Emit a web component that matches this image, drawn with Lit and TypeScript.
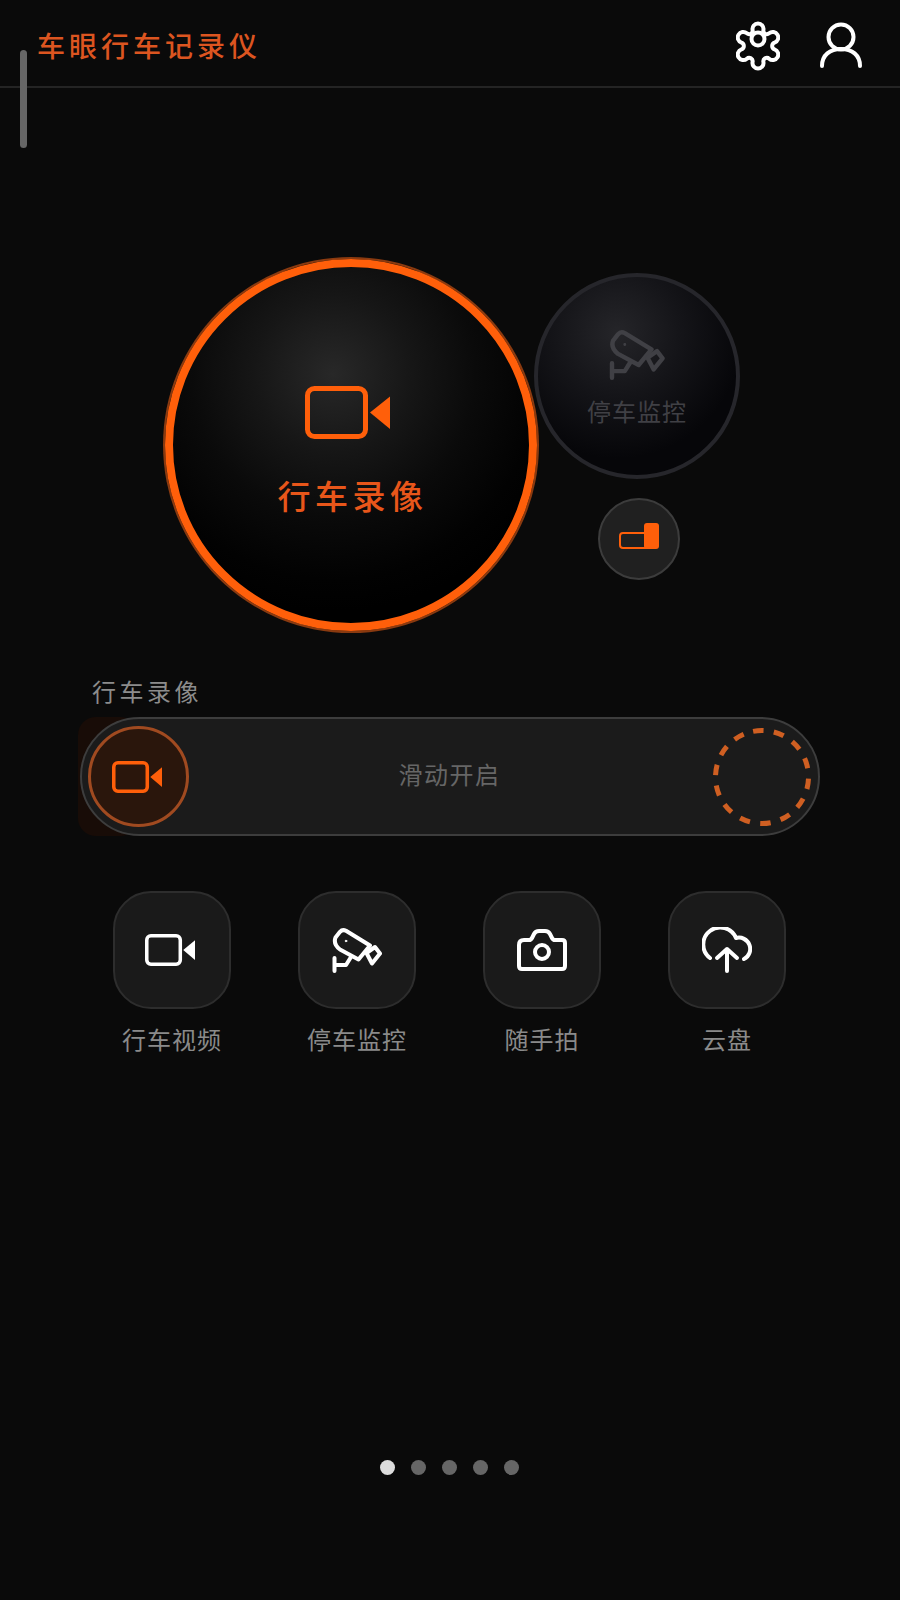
import { LitElement, html, css, svg } from "lit";
import { customElement } from "lit/decorators.js";

function gearPath(): string {
  const cx = 22, cy = 25, R = 17, r = 5.5, rv = 3.5, n = 6;
  const half = R * Math.sin(Math.PI / n);
  const apo = R * Math.cos(Math.PI / n);
  const dv = apo + Math.sqrt((r + rv) ** 2 - half ** 2);
  const pol = (rad: number, deg: number): [number, number] => [
    cx + rad * Math.cos((deg * Math.PI) / 180),
    cy + rad * Math.sin((deg * Math.PI) / 180),
  ];
  const tangent = (lobeDeg: number, valleyDeg: number) => {
    const c = pol(R, lobeDeg);
    const v = pol(dv, valleyDeg);
    const t = r / (r + rv);
    return [c[0] + (v[0] - c[0]) * t, c[1] + (v[1] - c[1]) * t];
  };
  let d = "";
  for (let i = 0; i < n; i++) {
    const a = -90 + i * 60;
    const start = tangent(a, a - 30);
    const end = tangent(a, a + 30);
    const next = tangent(a + 60, a + 30);
    if (i === 0) d += `M${start[0].toFixed(2)} ${start[1].toFixed(2)}`;
    d += `A${r} ${r} 0 1 1 ${end[0].toFixed(2)} ${end[1].toFixed(2)}`;
    d += `A${rv} ${rv} 0 0 0 ${next[0].toFixed(2)} ${next[1].toFixed(2)}`;
  }
  return d + "Z";
}

const videoIcon = (w: number, h: number, sw: number, cls: string) => html`
  <svg class=${cls} width=${w} height=${h} viewBox="0 0 85 53" preserveAspectRatio="none">
    <rect x=${sw / 2} y=${sw / 2} width=${63 - sw} height=${53 - sw} rx="7" fill="none" stroke="currentColor" stroke-width=${sw}></rect>
    <path d="M65 26.5 85 10.5V43Z" fill="currentColor"></path>
  </svg>`;

const cctvIcon = (w: number, h: number, cls: string) => html`
  <svg class=${cls} width=${w} height=${h} viewBox="0 0 50 45" fill="none" stroke="currentColor" stroke-width="4" stroke-linejoin="round" stroke-linecap="round">
    <path d="M3.5 9.5 8 3.8Q10.5 1 14 2.8L38 17.500 26.500 31.500 8 21.5Q1 16 3.5 9.5Z"></path>
    <path d="M34.5 25 43 19 48 25.5 40 35.5Z"></path>
    <path d="M2.5 30V43M2.5 37H14L19 29"></path>
    <circle cx="14" cy="13" r=".8" fill="currentColor" stroke-width="1"></circle>
  </svg>`;

const tiles = [
  { label: "行车视频", icon: () => videoIcon(50, 32, 6, "ink nudge") },
  { label: "停车监控", icon: () => cctvIcon(50, 45, "ink") },
  {
    label: "随手拍",
    icon: () => html`<svg class="ink" width="50" height="42" viewBox="0 0 50 42" fill="none" stroke="currentColor" stroke-width="4" stroke-linejoin="round" stroke-linecap="round">
      <path d="M2 16Q2 11 7 11H12Q14 11 15 9L17 5Q18.500 2 22 2H28Q31.500 2 33 5L35 9Q36 11 38 11H45Q48 11 48 14V37Q48 40 45 40H5Q2 40 2 37Z"></path>
      <circle cx="25" cy="23" r="7"></circle>
    </svg>`,
  },
  {
    label: "云盘",
    icon: () => html`<svg class="ink" width="50" height="46" viewBox="0 0 50 46" fill="none" stroke="currentColor" stroke-width="4" stroke-linecap="round" stroke-linejoin="round">
      <path d="M8 31A17 17 0 1 1 34 11A11.300 11.300 0 0 1 42 32"></path>
      <path d="M25 44V22M15 31 25 22 35 31"></path>
    </svg>`,
  },
];

@customElement("app-root")
export class AppRoot extends LitElement {
  static styles = css`
    :host {
      display: block;
      width: 900px;
      height: 1600px;
      background: #0a0a0a;
      font-family: "Noto Sans CJK SC", "Noto Sans", sans-serif;
      overflow: hidden;
    }
    .page { position: relative; width: 900px; height: 1600px; display: flex; flex-direction: column; }
    .scrollbar {
      position: absolute; left: 20px; top: 50px; width: 7px; height: 98px;
      background: #666; border-radius: 4px;
    }
    header {
      height: 88px; box-sizing: border-box; border-bottom: 2px solid #242424;
      display: flex; align-items: center; padding: 4px 38px 0 37px;
    }
    .title { flex: 1; color: #dc5520; font-size: 28px; font-weight: 500; letter-spacing: 4px; line-height: 36px; }
    .head-icons { display: flex; align-items: center; gap: 40px; color: #fff; }
    .gear { margin-top: 1px; }
    .hero { display: flex; margin: 169px 0 0 163px; }
    .big {
      width: 372px; height: 372px; margin: 2px; box-sizing: border-box; border-radius: 50%;
      border: 8.5px solid #ff5f0a;
      box-shadow: 0 0 0 2px #8a3a10;
      background: radial-gradient(circle at 45% 30%, #282828 0, #161616 25%, #0a0a0a 45%, #020202 65%, #000 75%);
      display: flex; flex-direction: column; align-items: center;
      color: #ff5f0a; position: relative; z-index: 1;
    }
    .big svg { margin: 119px 8px 0 0; }
    .big span { color: #e8561a; font-size: 33px; font-weight: 500; letter-spacing: 4.5px; line-height: 44px; margin: 34px 0 0 3px; }
    .side { display: flex; flex-direction: column; align-items: center; margin: 16px 0 0 -5px; }
    .small {
      width: 206px; height: 206px; box-sizing: border-box; border-radius: 50%;
      border: 4px solid #26262b;
      background: radial-gradient(circle at 40% 28%, #252529 0, #141418 35%, #060609 68%);
      display: flex; flex-direction: column; align-items: center; color: #404045;
    }
    .small svg { margin-top: 53px; }
    .small span { font-size: 24px; letter-spacing: 1px; line-height: 34px; margin-top: 14px; }
    .toggle {
      width: 82px; height: 82px; box-sizing: border-box; border-radius: 50%;
      margin: 19px 0 0 4px; background: #202020; border: 2px solid #3c3c3c;
      display: flex; align-items: center; justify-content: center;
    }
    .toggle svg { margin-bottom: 7px; }
    .slider-label { color: #8c8c8c; font-size: 24px; letter-spacing: 3.5px; line-height: 32px; margin: 42px 0 0 92px; }
    .slider-wrap { position: relative; margin: 10px 0 0 80px; width: 740px; }
    .slider-glow {
      position: absolute; left: -2px; top: 0; width: 60px; height: 119px;
      background: #180c07; border-radius: 18px;
    }
    .slider {
      position: relative; height: 119px; box-sizing: border-box; border-radius: 60px;
      background: #1b1b1b; border: 2px solid #3d3d3d;
      display: flex; align-items: center; justify-content: space-between; padding: 0 7px 0 6px;
    }
    .knob {
      width: 101px; height: 101px; box-sizing: border-box; border-radius: 50%;
      border: 3px solid #a04a20; background: #2a160c; color: #ff5f0a;
      display: flex; align-items: center; justify-content: center;
    }
    .knob svg { margin-right: 4px; }
    .hint { color: #666; font-size: 24px; line-height: 34px; letter-spacing: 1.5px; margin: 0 3px 6px 0; }
    .tiles { display: flex; gap: 67px; margin: 55px 0 0 113px; }
    .tile { width: 118px; display: flex; flex-direction: column; align-items: center; }
    .box {
      width: 118px; height: 118px; box-sizing: border-box; border-radius: 38px;
      background: #1a1a1a; border: 2px solid #2d2d2d;
      display: flex; align-items: center; justify-content: center;
    }
    .ink { color: #fff; }
    .nudge { margin-right: 4px; }
    .tile span { white-space: nowrap; color: #8a8a8a; font-size: 24px; letter-spacing: 1px; line-height: 34px; margin-top: 13px; }
    .dots { display: flex; gap: 16px; margin: 404px 0 0 380px; }
    .dot { width: 15px; height: 15px; border-radius: 50%; background: #666; }
    .dot.on { background: #ddd; }
  `;

  render() {
    return html`
      <div class="page">
        <header>
          <div class="title">车眼行车记录仪</div>
          <div class="head-icons">
            <svg class="gear" width="44" height="50" viewBox="0 0 44 50" fill="none" stroke="currentColor" stroke-width="4" stroke-linejoin="round">
              ${svg`<path d=${gearPath()}></path>`}
              <circle cx="22" cy="18" r="6.5"></circle>
            </svg>
            <svg width="42" height="46" viewBox="0 0 42 46" fill="none" stroke="currentColor" stroke-width="4" stroke-linecap="round">
              <circle cx="21" cy="15" r="12.5"></circle>
              <path d="M2 44C2 33 10 27 21 27S40 33 40 44"></path>
            </svg>
          </div>
        </header>
        <div class="scrollbar"></div>
        <section class="hero">
          <div class="big">
            ${videoIcon(85, 53, 5, "")}
            <span>行车录像</span>
          </div>
          <div class="side">
            <div class="small">
              ${cctvIcon(56, 50, "")}
              <span>停车监控</span>
            </div>
            <div class="toggle">
              <svg width="40" height="26" viewBox="0 0 40 26">
                <rect x="1" y="10" width="30" height="15" rx="3" fill="none" stroke="#ff5f0a" stroke-width="2"></rect>
                <rect x="25" y="0" width="15" height="26" rx="3" fill="#ff5f0a"></rect>
              </svg>
            </div>
          </div>
        </section>
        <div class="slider-label">行车录像</div>
        <div class="slider-wrap">
          <div class="slider-glow"></div>
          <div class="slider">
            <div class="knob">${videoIcon(50, 32, 6, "")}</div>
            <div class="hint">滑动开启</div>
            <svg width="98" height="98" viewBox="0 0 98 98" fill="none">
              <circle cx="49" cy="49" r="46.5" stroke="#cf5f22" stroke-width="5" stroke-dasharray="10.5 10.37" transform="rotate(-101 49 49)"></circle>
            </svg>
          </div>
        </div>
        <div class="tiles">
          ${tiles.map(
            (t) => html`<div class="tile"><div class="box">${t.icon()}</div><span>${t.label}</span></div>`
          )}
        </div>
        <div class="dots">
          ${[0, 1, 2, 3, 4].map((i) => html`<div class="dot ${i === 0 ? "on" : ""}"></div>`)}
        </div>
      </div>
    `;
  }
}
